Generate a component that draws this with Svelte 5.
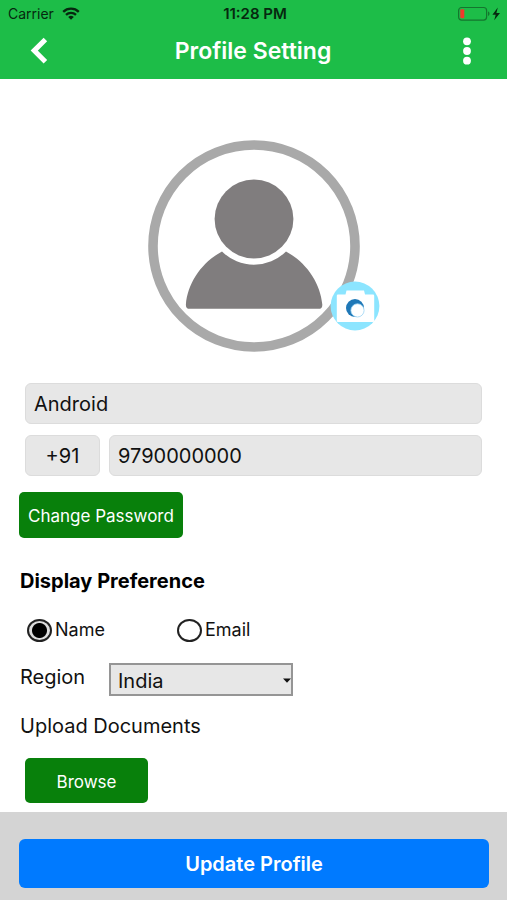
<script>
  let name = $state('Android');
  let code = $state('+91');
  let phone = $state('9790000000');
  let preference = $state('name');
  let region = $state('India');
</script>

<div class="screen">
  <header>
    <div class="status">
      <div class="carrier">
        <span>Carrier</span>
        <svg width="18" height="13" viewBox="0 0 18 13" aria-hidden="true">
          <g fill="none" stroke="#06280f" stroke-width="2.3">
            <path d="M1.2 4.8a11.2 11.2 0 0 1 15.6 0" />
            <path d="M4 7.9a7.2 7.2 0 0 1 10 0" />
          </g>
          <path d="M9 12.8 6.2 10a4 4 0 0 1 5.6 0z" fill="#06280f" />
        </svg>
      </div>
      <span class="time">11:28 PM</span>
      <div class="power">
        <svg width="44" height="16" viewBox="0 0 44 16" aria-hidden="true">
          <rect x="0.6" y="1.5" width="28" height="12.6" rx="3" fill="none" stroke="#14762e" stroke-width="1.2" />
          <rect x="2.3" y="3.3" width="4" height="9" rx="1" fill="#f0392b" />
          <path d="M30 5.6c2 .6 2 3.8 0 4.4z" fill="#14762e" />
          <path d="M39.8 1.6 34.4 8.700h3.300l-1.500 5.600 5.800-7.400h-3.600z" fill="#06280f" />
        </svg>
      </div>
    </div>
    <nav>
      <button class="icon" aria-label="Back">
        <svg width="20" height="28" viewBox="0 0 20 28">
          <path d="M16.4 2.5 5.2 13.6 16.4 24.8" fill="none" stroke="#fff" stroke-width="5" />
        </svg>
      </button>
      <h1>Profile Setting</h1>
      <button class="icon" aria-label="More options">
        <svg width="10" height="28" viewBox="0 0 10 28" fill="#fff">
          <circle cx="5" cy="4.3" r="3.9" />
          <circle cx="5" cy="14" r="3.9" />
          <circle cx="5" cy="23.7" r="3.9" />
        </svg>
      </button>
    </nav>
  </header>

  <main>
    <div class="avatar">
      <svg width="212" height="212" viewBox="0 0 212 212" role="img" aria-label="Profile picture">
        <circle cx="106" cy="106" r="101" fill="#fff" stroke="#a9a9a9" stroke-width="9.6" />
        <circle cx="106" cy="79" r="39.4" fill="#807d7e" />
        <path d="M74 111.5C54 122 39.5 143 37.9 164.5q-.2 4.3 3.8 4.3h128.8q4 0 3.8-4.3C172.5 143 158 122 138 111.5a45.5 45.5 0 0 1-64 0z" fill="#807d7e" />
      </svg>
      <button class="camera" aria-label="Change photo">
        <svg width="50" height="50" viewBox="0 0 50 50">
          <circle cx="25" cy="25" r="24.4" fill="#8ce5ff" />
          <path d="M8 13.500h7.500l1-4H34l1 4h8q1.200 0 1.200 1.200v25.100Q44.200 41 43 41H8q-1.200 0-1.200-1.200V14.700Q6.800 13.500 8 13.500z" fill="#fff" />
          <circle cx="25" cy="27" r="9" fill="#1f78b7" />
          <circle cx="27.5" cy="29.400" r="6.600" fill="#fff" stroke="#9dd5f5" stroke-width="0.800" />
        </svg>
      </button>
    </div>

    <form id="profile" onsubmit={(e) => e.preventDefault()}>
      <div class="fields">
        <input type="text" aria-label="Name" bind:value={name} />
        <div class="phone">
          <input class="code" type="text" aria-label="Country code" bind:value={code} />
          <input type="tel" aria-label="Phone number" bind:value={phone} />
        </div>
      </div>

      <button type="button" class="green password">Change Password</button>

      <fieldset>
        <legend>Display Preference</legend>
        <div class="options">
          <label><input type="radio" name="preference" value="name" bind:group={preference} />Name</label>
          <label><input type="radio" name="preference" value="email" bind:group={preference} />Email</label>
        </div>
      </fieldset>

      <div class="region">
        <label for="region">Region</label>
        <div class="select">
          <select id="region" bind:value={region}>
            <option>India</option>
          </select>
          <svg width="8" height="5" viewBox="0 0 8 5" aria-hidden="true"><path d="M0 .4h8L4 4.800z" fill="#111" /></svg>
        </div>
      </div>

      <p id="documents">Upload Documents</p>
      <button type="button" class="green browse" aria-describedby="documents">Browse</button>
    </form>
  </main>

  <footer>
    <button form="profile" class="update">Update Profile</button>
  </footer>
</div>

<style>
  :global(body) {
    margin: 0;
    background: #fff;
  }

  .screen {
    display: flex;
    flex-direction: column;
    min-height: 100vh;
    font-family: Inter, 'Liberation Sans', sans-serif;
    font-size: 20px;
    line-height: 24px;
    color: #111;
  }

  button,
  input,
  select {
    box-sizing: border-box;
    margin: 0;
    font: inherit;
    color: inherit;
  }

  button {
    border: 0;
    cursor: pointer;
  }

  svg {
    display: block;
  }

  header {
    background: #1dbd48;
  }

  .status {
    display: grid;
    grid-template-columns: 1fr auto 1fr;
    align-items: center;
    height: 27px;
    padding: 0 5px 0 8px;
    font-size: 14px;
    line-height: 16px;
    color: #06280f;
  }

  .carrier {
    display: flex;
    align-items: center;
    gap: 8px;
  }

  .time {
    font-size: 15px;
    font-weight: 600;
  }

  .power {
    justify-self: end;
  }

  nav {
    display: flex;
    align-items: center;
    justify-content: space-between;
    height: 48px;
    padding: 0 29px 4px 28px;
    color: #fff;
  }

  h1 {
    margin: 0;
    font-size: 23px;
    font-weight: 600;
  }

  .icon {
    display: flex;
    justify-content: center;
    width: 22px;
    padding: 0;
    background: none;
  }

  main {
    flex: 1;
    padding: 61px 19px 9px;
  }

  .avatar {
    position: relative;
    width: 212px;
    margin: 0 auto 31px;
  }

  .camera {
    position: absolute;
    right: -20px;
    bottom: 21px;
    padding: 0;
    border-radius: 50%;
    background: none;
  }

  form {
    display: flex;
    flex-direction: column;
    align-items: flex-start;
  }

  .fields {
    display: flex;
    flex-direction: column;
    gap: 11px;
    align-self: stretch;
    margin: 0 6px 16px;
  }

  .fields input {
    flex: 1;
    min-width: 0;
    height: 41px;
    min-height: 41px;
    padding: 0 8px;
    border: 1px solid #dcdcdc;
    border-radius: 6px;
    background: #e7e7e7;
  }

  .phone {
    display: flex;
    gap: 9px;
  }

  .phone .code {
    flex: 0 0 75px;
    text-align: center;
  }

  .green {
    padding: 2px 9px 0;
    border-radius: 5px;
    background: #08800b;
    color: #fff;
    font-size: 17px;
  }

  .password {
    height: 46px;
  }

  fieldset {
    min-width: 0;
    margin: 31px 0 0;
    padding: 0;
    border: 0;
  }

  legend {
    padding: 0 1px;
    font-weight: 700;
    color: #000;
  }

  .options {
    display: grid;
    grid-template-columns: 150px 150px;
    margin: 25px 0 0 8px;
    font-size: 18px;
  }

  .options label {
    display: flex;
    align-items: center;
    gap: 3px;
  }

  .options input {
    appearance: none;
    width: 25px;
    height: 23px;
    border: 2px solid #222;
    border-radius: 50%;
    background: #fff;
  }

  .options input:checked {
    background: radial-gradient(circle, #000 7px, #ddd 8px);
  }

  .region {
    display: grid;
    grid-template-columns: 90px 184px;
    align-items: start;
    margin: 21px 0 18px;
  }

  .region label {
    padding: 2px 1px 0;
  }

  .select {
    position: relative;
  }

  .select svg {
    position: absolute;
    right: 2px;
    top: 15px;
    pointer-events: none;
  }

  select {
    display: block;
    appearance: none;
    width: 100%;
    height: 33px;
    padding: 2px 7px 0;
    border: 2px solid #959595;
    border-radius: 0;
    background: #e7e7e7;
  }

  p {
    margin: 0;
    padding: 0 1px;
  }

  .browse {
    width: 123px;
    height: 45px;
    margin: 20px 0 0 6px;
  }

  footer {
    padding: 27px 18px 12px 19px;
    background: #d4d4d4;
  }

  .update {
    width: 100%;
    height: 49px;
    border-radius: 6px;
    background: #007aff;
    color: #fff;
    font-weight: 600;
  }
</style>
